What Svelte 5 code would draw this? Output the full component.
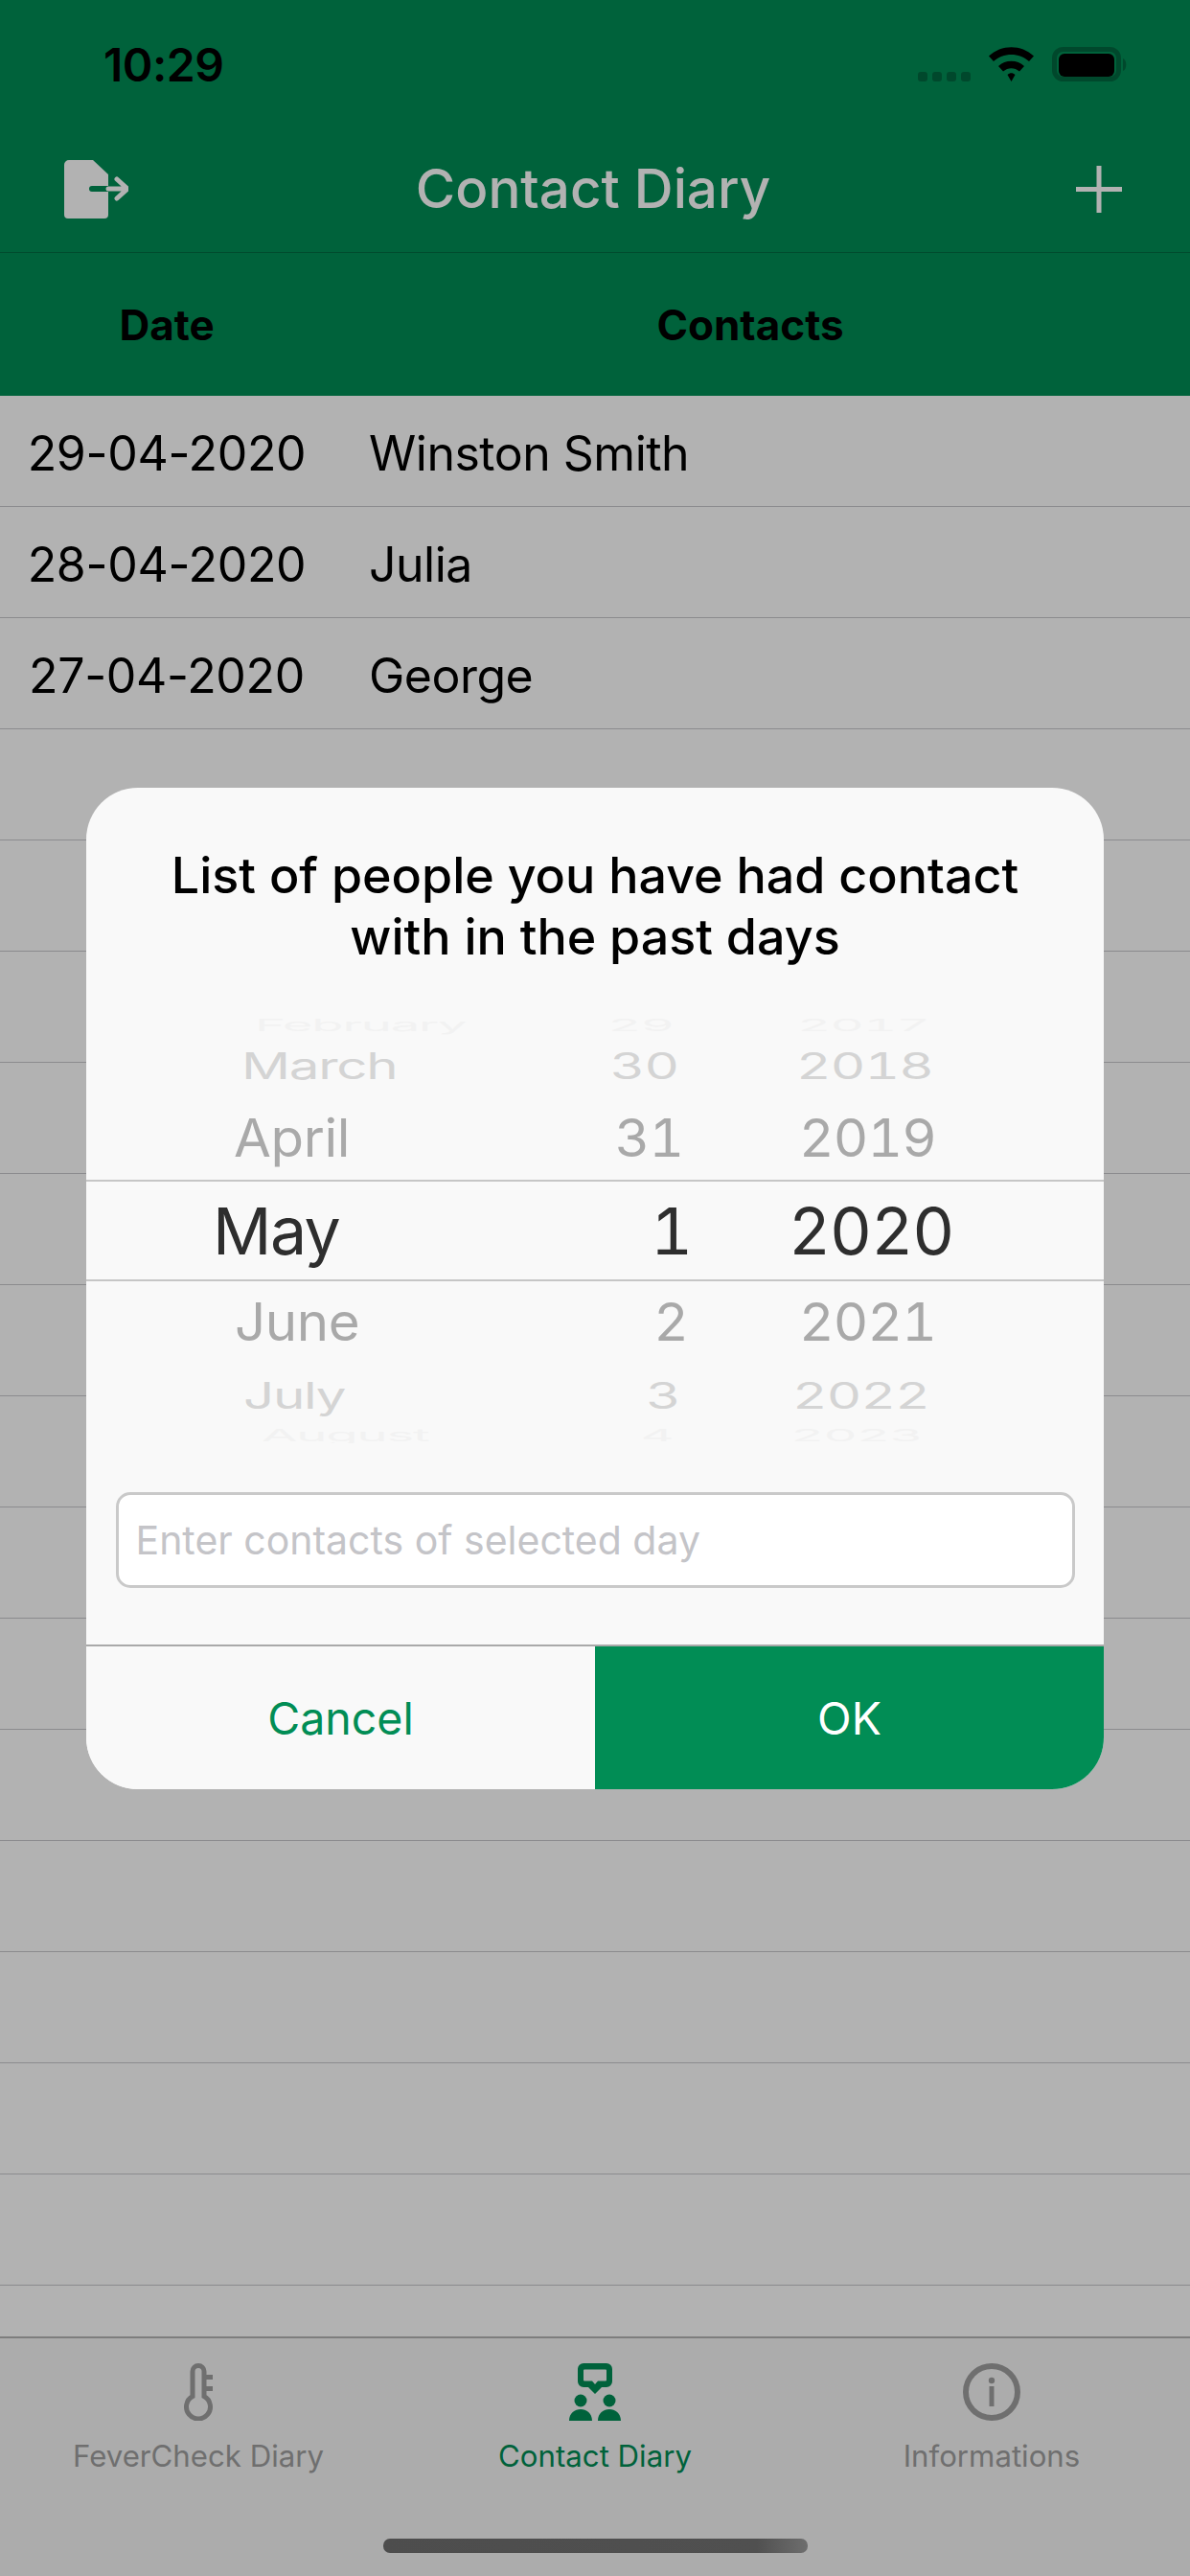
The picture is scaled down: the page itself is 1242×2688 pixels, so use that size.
<script>
  const diary = [
    { date: '29-04-2020', who: 'Winston Smith' },
    { date: '28-04-2020', who: 'Julia' },
    { date: '27-04-2020', who: 'George' }
  ];
  const rows = [...diary, ...Array(15).fill({ date: '', who: '' })];

  const wheel = [
    { kind: 'faint', m: 'February', mx: 176, d: '29', dx: 57, y: '2017', yx: 72 },
    { kind: 'far', m: 'March', mx: 162, d: '30', dx: 52, y: '2018', yx: 71 },
    { kind: 'near', m: 'April', mx: 154, d: '31', dx: 47, y: '2019', yx: 74 },
    { kind: 'sel', m: 'May', mx: 132, d: '1', dx: 38, y: '2020', yx: 63 },
    { kind: 'near', m: 'June', mx: 155, d: '2', dx: 42, y: '2021', yx: 74 },
    { kind: 'far', m: 'July', mx: 164, d: '3', dx: 50, y: '2022', yx: 67 },
    { kind: 'faint', m: 'August', mx: 183, d: '4', dx: 57, y: '2023', yx: 65 }
  ];
</script>

<div class="screen">
  <header class="top">
    <div class="status">
      <span class="time">10:29</span>
      <svg class="status-icons" width="220" height="36" viewBox="0 0 220 36">
        <g fill="#000" fill-opacity="0.26">
          <rect x="0" y="26" width="10" height="10" rx="3" />
          <rect x="15" y="26" width="10" height="10" rx="3" />
          <rect x="30" y="26" width="10" height="10" rx="3" />
          <rect x="45" y="26" width="10" height="10" rx="3" />
        </g>
        <path d="M74 9.5C87 -3 108 -3 121 9.5L116 15C106 5.5 89 5.5 79 15Z M84 20C91 13 104 13 111 20L106 25.500C101 21 94 21 89 25.500Z M93.500 29C96 26.500 99 26.500 101.500 29L97.500 36Z" />
        <rect x="142.500" y="2.500" width="67" height="31" rx="9" fill="none" stroke="#000" stroke-opacity="0.26" stroke-width="5" />
        <rect x="147" y="7" width="58" height="24" rx="6" />
        <path d="M214 12C218 13 219 23 214 25Z" fill-opacity="0.26" />
      </svg>
    </div>
    <nav class="nav">
      <svg class="logout" width="67" height="61" viewBox="0 0 67 61">
        <path fill="#fff" fill-rule="evenodd" d="M5 0H30L46 15V27H29A3 3 0 0 0 29 33H46V57A4 4 0 0 1 42 61H4A4 4 0 0 1 0 57V5A5 5 0 0 1 5 0Z" />
        <path d="M46 30H65M55 20L66 30L55 40" fill="none" stroke="#fff" stroke-width="5" stroke-linecap="round" stroke-linejoin="round" />
      </svg>
      <h1>Contact Diary</h1>
      <svg class="plus" width="48" height="49" viewBox="0 0 48 49">
        <path d="M24 0V49M0 24.500H48" stroke="#fff" stroke-width="5" />
      </svg>
    </nav>
    <div class="columns">
      <span>Date</span>
      <span>Contacts</span>
    </div>
  </header>

  <ul class="list">
    {#each rows as row}
      <li>
        <span class="date">{row.date}</span>
        <span class="who">{row.who}</span>
      </li>
    {/each}
  </ul>

  <footer class="tabs">
    <div class="tab">
      <svg width="60" height="60" viewBox="0 0 60 60">
        <path fill="none" stroke="#a0a0a0" stroke-width="5" d="M24 34.500V8.500A6 6 0 0 1 36 8.500V34.500A12.500 12.500 0 1 1 24 34.500Z" />
        <path stroke="#a0a0a0" stroke-width="5" d="M36 14.500H45M36 26.500H45" />
      </svg>
      <span>FeverCheck Diary</span>
    </div>
    <div class="tab active">
      <svg width="60" height="60" viewBox="0 0 60 60">
        <path fill="#018d55" fill-rule="evenodd" d="M18 0H42A6 6 0 0 1 48 6V19A6 6 0 0 1 42 25H37L30 32L23 25H18A6 6 0 0 1 12 19V6A6 6 0 0 1 18 0ZM19 6.500A1 1 0 0 0 18 7.500V17.500A1 1 0 0 0 19 18.500H27L30 22L33 18.500H41A1 1 0 0 0 42 17.500V7.500A1 1 0 0 0 41 6.500Z" />
        <circle cx="15" cy="39" r="6.500" fill="#018d55" />
        <circle cx="45" cy="39" r="6.500" fill="#018d55" />
        <path fill="#018d55" d="M3 60C3 44 27 44 27 60ZM33 60C33 44 57 44 57 60Z" />
      </svg>
      <span>Contact Diary</span>
    </div>
    <div class="tab">
      <svg width="60" height="60" viewBox="0 0 60 60">
        <circle cx="30" cy="30" r="27" fill="none" stroke="#a0a0a0" stroke-width="6" />
        <circle cx="30" cy="18" r="3.200" fill="#a0a0a0" />
        <path d="M30 24V45" stroke="#a0a0a0" stroke-width="5" />
      </svg>
      <span>Informations</span>
    </div>
  </footer>

  <div class="overlay">
    <section class="dialog">
      <h2>List of people you have had contact with in the past days</h2>
      <div class="picker">
        {#each wheel as w}
          <div class="wheel-row {w.kind}">
            <span class="cell"><span class="txt left month" style="margin-left: {w.mx}px">{w.m}</span></span>
            <span class="cell day"><span class="txt right num" style="margin-right: {w.dx}px">{w.d}</span></span>
            <span class="cell"><span class="txt left num" style="margin-left: {w.yx}px">{w.y}</span></span>
          </div>
        {/each}
      </div>
      <input class="field" type="text" placeholder="Enter contacts of selected day" />
      <div class="actions">
        <button class="cancel">Cancel</button>
        <button class="ok">OK</button>
      </div>
    </section>
  </div>

  <div class="home"></div>
</div>

<style>
  :global(body) {
    margin: 0;
    background: #fff;
  }

  .screen {
    position: relative;
    width: 1242px;
    height: 2688px;
    overflow: hidden;
    display: flex;
    flex-direction: column;
    font-family: Inter, "Liberation Sans", sans-serif;
    color: #000;
  }

  .top {
    background: #018d55;
    flex: none;
  }

  .status {
    height: 125px;
    box-sizing: border-box;
    padding: 40px 64px 0 108px;
    display: flex;
    justify-content: space-between;
    align-items: flex-start;
  }

  .time {
    font-size: 48px;
    line-height: 56px;
    font-weight: 600;
    letter-spacing: -0.5px;
  }

  .status-icons {
    margin-top: 9px;
  }

  .nav {
    height: 139px;
    box-sizing: border-box;
    padding: 6px 71px 0 67px;
    display: grid;
    grid-template-columns: 1fr auto 1fr;
    align-items: center;
    border-bottom: 1px solid #016e43;
  }

  .nav h1 {
    margin: -2px 0 0;
    font-size: 56.5px;
    font-weight: 500;
    color: #fff;
  }

  .plus {
    justify-self: end;
  }

  .columns {
    height: 149px;
    display: grid;
    grid-template-columns: 348px 870px;
    align-items: center;
    text-align: center;
    font-size: 44px;
    font-weight: 700;
  }

  .list {
    flex: 1;
    margin: 0;
    padding: 0;
    list-style: none;
    overflow: hidden;
    background: #fff;
  }

  .list li {
    height: 116px;
    box-sizing: border-box;
    border-bottom: 1px solid #c8c7cc;
    display: grid;
    grid-template-columns: 348px 1fr;
    align-items: center;
    font-size: 50px;
    padding-top: 4px;
  }

  .date {
    text-align: center;
    letter-spacing: -0.3px;
  }

  .who {
    padding-left: 37px;
    letter-spacing: -0.5px;
  }

  .tabs {
    flex: none;
    height: 250px;
    box-sizing: border-box;
    background: #f7f7f7;
    border-top: 2px solid #b4b4b4;
    display: grid;
    grid-template-columns: repeat(3, 414px);
    padding-top: 26px;
  }

  .tab {
    display: flex;
    flex-direction: column;
    align-items: center;
    gap: 17px;
    font-size: 31.2px;
    line-height: 40px;
    color: #a0a0a0;
  }

  .tab.active {
    color: #018d55;
  }

  .overlay {
    position: absolute;
    inset: 0;
    background: rgba(0, 0, 0, 0.3);
    display: flex;
    align-items: center;
    justify-content: center;
  }

  .dialog {
    width: 1062px;
    height: 1045px;
    background: #f9f9f9;
    border-radius: 54px;
    overflow: hidden;
    display: flex;
    flex-direction: column;
    align-items: center;
  }

  .dialog h2 {
    margin: 60px 80px 0;
    font-size: 52px;
    line-height: 64px;
    font-weight: 500;
    text-align: center;
  }

  .picker {
    align-self: stretch;
    margin-top: 49px;
    display: grid;
    grid-template-rows: 22px 62px 88px 106px 85px 68px 16px;
  }

  .wheel-row {
    display: grid;
    grid-template-columns: 420px 250px 392px;
    grid-template-rows: 100%;
    align-items: center;
    overflow: hidden;
    font-size: 68px;
    line-height: 84px;
    font-variant-numeric: tabular-nums;
  }

  .cell {
    display: block;
  }

  .day {
    text-align: right;
  }

  .txt {
    display: inline-block;
    white-space: nowrap;
  }

  .month {
    letter-spacing: -1.5px;
  }

  .num {
    letter-spacing: -1px;
  }

  .left {
    transform-origin: left center;
  }

  .right {
    transform-origin: right center;
  }

  .sel {
    color: #2e2e2e;
    border-top: 2px solid #c6c6c6;
    border-bottom: 2px solid #c6c6c6;
    box-sizing: border-box;
  }

  .near {
    color: #a9a9a9;
  }

  .near .txt {
    transform: scale(0.83, 0.8);
  }

  .near .month {
    letter-spacing: -0.5px;
  }

  .far {
    color: #d4d4d4;
  }

  .far .txt {
    transform: scale(0.83, 0.56);
  }

  .faint {
    color: #f2f2f2;
  }

  .faint .txt {
    transform: scale(0.8, 0.25);
  }

  .field {
    flex: none;
    width: 1001px;
    height: 100px;
    box-sizing: border-box;
    margin-top: 51px;
    padding: 0 18px;
    border: 3px solid #c9c9c9;
    border-radius: 15px;
    background: #fff;
    font: 400 41px Inter, "Liberation Sans", sans-serif;
  }

  .field::placeholder {
    color: #c4c4c8;
    opacity: 1;
  }

  .actions {
    align-self: stretch;
    margin-top: auto;
    height: 151px;
    box-sizing: border-box;
    display: grid;
    grid-template-columns: 1fr 1fr;
    border-top: 2px solid #a9a9a9;
  }

  .actions button {
    border: 0;
    padding: 2px 0 0;
    font: 400 46.5px Inter, "Liberation Sans", sans-serif;
  }

  .cancel {
    background: #f9f9f9;
    color: #018d55;
  }

  .ok {
    background: #018d55;
    color: #fff;
  }

  .home {
    position: absolute;
    left: 400px;
    bottom: 24px;
    width: 443px;
    height: 15px;
    border-radius: 7px;
    background: linear-gradient(90deg, #4d4d4d, #505050 88%, #6e6e6e);
  }
</style>
